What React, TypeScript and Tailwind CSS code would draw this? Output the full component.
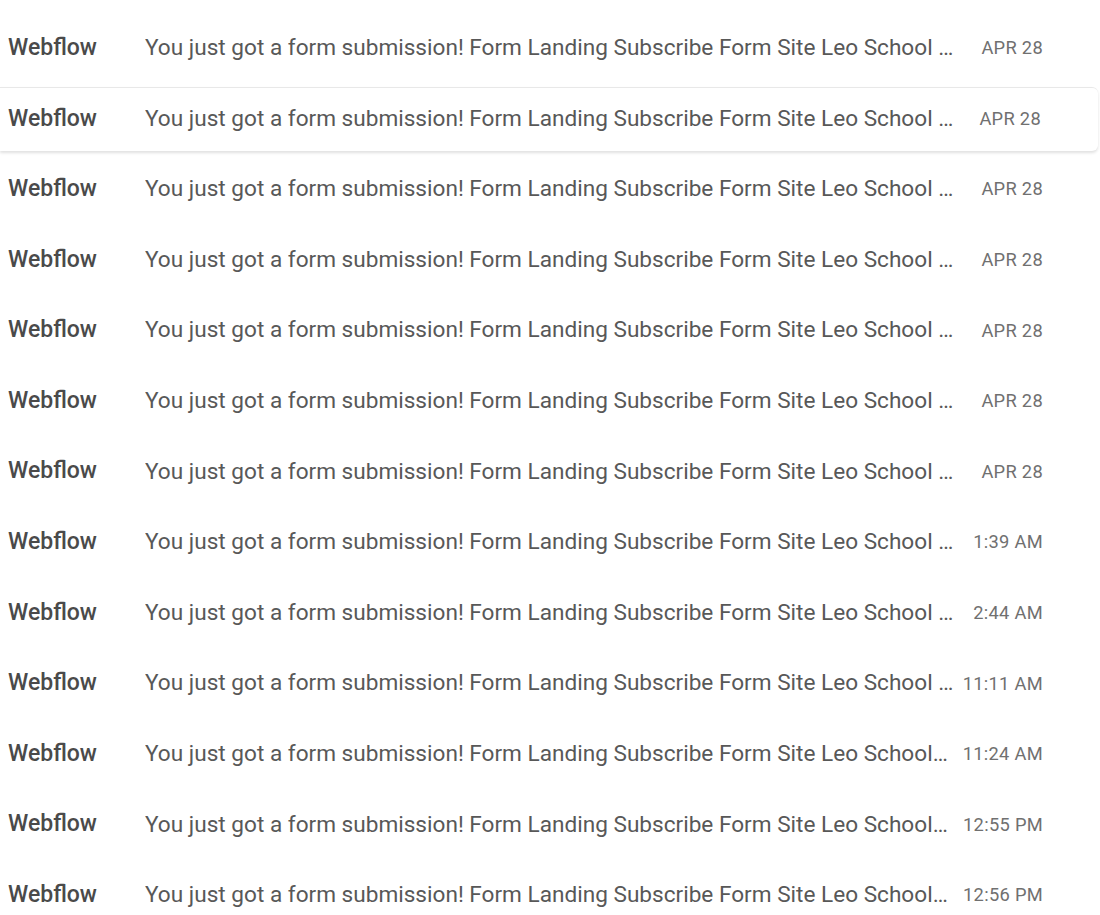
const FULL = 'You just got a form submission! Form Landing Subscribe Form Site Leo School …'
const TIGHT = 'You just got a form submission! Form Landing Subscribe Form Site Leo School…'

const rows = [
  { subject: FULL, date: 'APR 28' },
  { subject: FULL, date: 'APR 28', active: true },
  { subject: FULL, date: 'APR 28' },
  { subject: FULL, date: 'APR 28' },
  { subject: FULL, date: 'APR 28' },
  { subject: FULL, date: 'APR 28' },
  { subject: FULL, date: 'APR 28' },
  { subject: FULL, date: '1:39 AM' },
  { subject: FULL, date: '2:44 AM' },
  { subject: FULL, date: '11:11 AM' },
  { subject: TIGHT, date: '11:24 AM' },
  { subject: TIGHT, date: '12:55 PM' },
  { subject: TIGHT, date: '12:56 PM' },
]

function MailRow({ subject, date, active }: { subject: string; date: string; active?: boolean }) {
  return (
    <div
      className={
        'flex h-16 items-center pl-2 pr-[57px] ' +
        (active
          ? 'bg-white border-t border-[#e8e8e8] rounded-r-md mr-[2px] shadow-[0_2px_3px_rgba(0,0,0,0.12)]'
          : '')
      }
    >
      <span className="w-[137px] shrink-0 text-[23px] font-medium text-[#4a4a4a]">Webflow</span>
      <span className="w-[814px] shrink-0 whitespace-nowrap overflow-hidden text-[22.6px] text-[#585858]">{subject}</span>
      <span className="flex-1 whitespace-nowrap text-right text-[18.3px] tracking-[0.3px] text-[#707070]">{date}</span>
    </div>
  )
}

export default function App() {
  return (
    <div className="min-h-[915px] bg-white pt-[16px] font-['Roboto',sans-serif] flex flex-col gap-[6.6px]">
      {rows.map((row, i) => (
        <MailRow key={i} subject={row.subject} date={row.date} active={row.active} />
      ))}
    </div>
  )
}
